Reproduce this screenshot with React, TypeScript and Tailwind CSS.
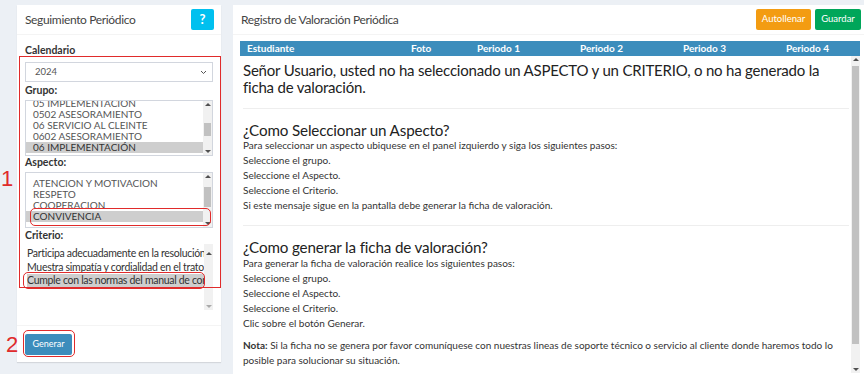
import React from "react";

const F = { fontFamily: '"Source Sans Pro", Lato, "Noto Sans", sans-serif' };

function VScroll({ thumbTop, thumbH, h }: { thumbTop: number; thumbH: number; h: number }) {
  return (
    <div className="relative w-[9px] shrink-0 bg-[#f1f1f1]" style={{ height: h }}>
      <div className="absolute left-0 right-0 top-[2px] flex justify-center">
        <div className="w-0 h-0 border-l-[3px] border-r-[3px] border-b-[3px] border-l-transparent border-r-transparent border-b-[#505050]" />
      </div>
      <div className="absolute left-[1px] right-[1px] bg-[#c1c1c1]" style={{ top: thumbTop, height: thumbH }} />
      <div className="absolute left-0 right-0 bottom-[2px] flex justify-center">
        <div className="w-0 h-0 border-l-[3px] border-r-[3px] border-t-[3px] border-l-transparent border-r-transparent border-t-[#505050]" />
      </div>
    </div>
  );
}

export default function App() {
  return (
    <div className="relative w-[864px] h-[374px] overflow-hidden bg-[#ecf0f5] flex pt-[5px] pl-[17px] gap-[12px] text-[#333]" style={F}>
      {/* Left panel */}
      <div className="w-[204px] h-[357px] bg-white shadow-[0_1px_1px_rgba(0,0,0,0.1)] flex flex-col shrink-0">
        <div className="h-[30px] flex items-center justify-between pl-[8px] pr-[7px] border-b border-[#f4f4f4]">
          <span className="text-[12px] tracking-[-0.35px] text-[#444]">Seguimiento Periódico</span>
          <div className="w-[23px] h-[21px] bg-[#00c0ef] rounded-[2px] flex items-center justify-center text-white font-bold text-[13px]">?</div>
        </div>
        <div className="px-[8px] pt-[8px] flex flex-col">
          <div className="text-[10.5px] font-bold text-[#333] leading-[14px]">Calendario</div>
          <div className="mt-[5px] h-[20px] border border-[#d2d6de] flex items-center justify-between pl-[9px] pr-[5px]">
            <span className="text-[9.5px] text-[#555]">2024</span>
            <svg width="7" height="5" viewBox="0 0 7 5"><path d="M1 1l2.5 2.5L6 1" stroke="#555" strokeWidth="1" fill="none" /></svg>
          </div>
          <div className="mt-[2px] text-[10.5px] font-bold leading-[12px]">Grupo:</div>
          <div className="mt-[4px] h-[56px] border border-[#d2d6de] flex overflow-hidden">
            <div className="flex-1 flex flex-col pl-[7px] text-[10px] text-[#555] leading-[11px] whitespace-nowrap">
              <div className="-mt-[3px]">05 IMPLEMENTACION</div>
              <div>0502 ASESORAMIENTO</div>
              <div>06 SERVICIO AL CLEINTE</div>
              <div>0602 ASESORAMIENTO</div>
              <div className="bg-[#cecece] text-[#333] -ml-[7px] pl-[7px]">06 IMPLEMENTACIÓN</div>
            </div>
            <VScroll h={54} thumbTop={22} thumbH={13} />
          </div>
          <div className="text-[10.5px] font-bold leading-[12px]">Aspecto:</div>
          <div className="mt-[4px] h-[56px] border border-[#d2d6de] flex overflow-hidden">
            <div className="flex-1 flex flex-col pl-[7px] pt-[5px] text-[10px] text-[#555] leading-[11px] whitespace-nowrap overflow-hidden">
              <div>ATENCION Y MOTIVACION</div>
              <div>RESPETO</div>
              <div>COOPERACION</div>
              <div className="bg-[#cecece] text-[#333] -ml-[7px] pl-[7px]">CONVIVENCIA</div>
            </div>
            <VScroll h={54} thumbTop={14} thumbH={20} />
          </div>
          <div className="mt-[1px] text-[10.5px] font-bold leading-[12px]">Criterio:</div>
          <div className="mt-[3px] h-[66px] flex overflow-hidden">
            <div className="flex-1 flex flex-col pl-[2px] pt-[3px] text-[10.5px] tracking-[-0.3px] text-[#333] leading-[13.5px] whitespace-nowrap overflow-hidden">
              <div>Participa adecuadamente en la resolución de conflictos</div>
              <div>Muestra simpatía y cordialidad en el trato</div>
              <div className="bg-[#cecece]">Cumple con las normas del manual de convivencia</div>
            </div>
            <div className="relative w-[9px] h-[66px] bg-[#f1f1f1] shrink-0">
              <div className="absolute left-0 right-0 top-[8px] flex justify-center">
                <div className="w-0 h-0 border-l-[3px] border-r-[3px] border-b-[3px] border-l-transparent border-r-transparent border-b-[#505050]" />
              </div>
              <div className="absolute left-0 right-0 bottom-[2px] flex justify-center">
                <div className="w-0 h-0 border-l-[3px] border-r-[3px] border-t-[3px] border-l-transparent border-r-transparent border-t-[#aaa]" />
              </div>
            </div>
          </div>
        </div>
        <div className="mt-auto border-t border-[#f4f4f4] h-[37px] px-[8px] flex items-center">
          <div className="w-[47px] h-[21px] bg-[#3c8dbc] rounded-[2px] text-white text-[9px] flex items-center justify-center">Generar</div>
        </div>
      </div>

      {/* Right panel */}
      <div className="w-[640px] h-[374px] bg-white flex flex-col shrink-0">
        <div className="h-[30px] flex items-center justify-between pl-[8px] pr-[12px] border-b border-[#f4f4f4] shrink-0">
          <span className="text-[12px] tracking-[-0.35px] text-[#444]">Registro de Valoración Periódica</span>
          <div className="flex gap-[4px]">
            <div className="w-[55px] h-[21px] bg-[#f39c12] rounded-[2px] text-white text-[9.5px] flex items-center justify-center">Autollenar</div>
            <div className="w-[46px] h-[21px] bg-[#00a65a] rounded-[2px] text-white text-[9.5px] flex items-center justify-center">Guardar</div>
          </div>
        </div>
        <div className="pl-[7px] pt-[6px] w-[627px] flex flex-col flex-1">
          <div className="h-[15px] bg-[#3c8dbc] text-white font-bold text-[10px] flex items-center whitespace-nowrap">
            <span className="pl-[7px] w-[171px]">Estudiante</span>
            <span className="w-[66px]">Foto</span>
            <span className="w-[103px]">Periodo 1</span>
            <span className="w-[103px]">Periodo 2</span>
            <span className="w-[103px]">Periodo 3</span>
            <span>Periodo 4</span>
          </div>
          <div className="flex flex-1">
            <div className="flex-1 pl-[3px] pr-[2px] text-[#333]">
              <div className="pt-[6px] text-[15px] tracking-[-0.2px] leading-[17px] text-[#222]">
                Señor Usuario, usted no ha seleccionado un ASPECTO y un CRITERIO, o no ha generado la ficha de valoración.
              </div>
              <div className="mt-[12px] border-t border-[#eee]" />
              <div className="mt-[13px] text-[15.2px] tracking-[-0.15px] leading-[16px] text-[#222]">¿Como Seleccionar un Aspecto?</div>
              <div className="text-[10px] leading-[15px]">
                <div>Para seleccionar un aspecto ubiquese en el panel izquierdo y siga los siguientes pasos:</div>
                <div>Seleccione el grupo.</div>
                <div>Seleccione el Aspecto.</div>
                <div>Seleccione el Criterio.</div>
                <div>Si este mensaje sigue en la pantalla debe generar la ficha de valoración.</div>
              </div>
              <div className="mt-[12px] border-t border-[#eee]" />
              <div className="mt-[13px] text-[15.2px] tracking-[-0.15px] leading-[16px] text-[#222]">¿Como generar la ficha de valoración?</div>
              <div className="text-[10px] leading-[15px] mt-[1px]">
                <div>Para generar la ficha de valoración realice los siguientes pasos:</div>
                <div>Seleccione el grupo.</div>
                <div>Seleccione el Aspecto.</div>
                <div>Seleccione el Criterio.</div>
                <div>Clic sobre el botón Generar.</div>
                <p className="mt-[7px]"><b>Nota:</b> Si la ficha no se genera por favor comuníquese con nuestras lineas de soporte técnico o servicio al cliente donde haremos todo lo posible para solucionar su situación.</p>
              </div>
            </div>
            <VScroll h={317} thumbTop={10} thumbH={278} />
          </div>
        </div>
      </div>

      {/* Annotations */}
      <div className="absolute left-[19px] top-[56px] w-[202px] h-[232px] border-[1.5px] border-[#e02b2b]" />
      <div className="absolute left-[30px] top-[208px] w-[181px] h-[18px] border-[1.5px] border-[#e02b2b] rounded-[5px]" />
      <div className="absolute left-[23px] top-[272px] w-[182px] h-[17px] border-[1.5px] border-[#e02b2b] rounded-[5px]" />
      <div className="absolute left-[23px] top-[330px] w-[52px] h-[27px] border-[1.5px] border-[#e02b2b] rounded-[5px]" />
      <div className="absolute left-[1px] top-[168px] text-[#e02b2b] text-[22px] leading-[22px]" style={{ fontFamily: '"Liberation Sans", sans-serif' }}>1</div>
      <div className="absolute left-[6px] top-[334px] text-[#e02b2b] text-[22px] leading-[22px]" style={{ fontFamily: '"Liberation Sans", sans-serif' }}>2</div>
    </div>
  );
}
